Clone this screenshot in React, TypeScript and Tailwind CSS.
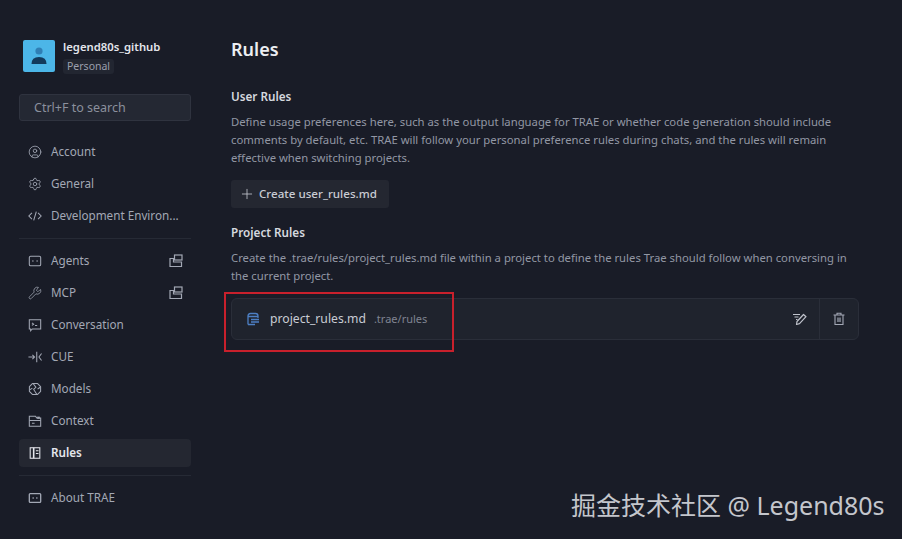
import { ReactNode } from "react";
import { CircleUser, Plus, Settings, Wrench } from "lucide-react";

const stroke = { fill: "none", stroke: "currentColor", strokeWidth: 1.2 };

const Svg = ({ children }: { children: ReactNode }) => (
    <svg width="16" height="16" viewBox="0 0 16 16" {...stroke}>
        {children}
    </svg>
);

const CodeIcon = () => (
    <Svg>
        <path d="M4.5 4.5 1 8l3.5 3.5M11.5 4.5 15 8l-3.5 3.5M9.5 3l-3 10" />
    </Svg>
);

const AgentsIcon = () => (
    <Svg>
        <rect x="1.5" y="2.5" width="13" height="11" rx="1.5" />
        <path d="M5 8h1.2M9.8 8H11" strokeWidth="1.6" />
    </Svg>
);

const ConversationIcon = () => (
    <Svg>
        <path d="M1.5 2h13v10.5H5L3 14.5v-2H1.5z" />
        <path d="M4.5 5.5 6.5 7l-2 1.5M8 8.5h2.5" />
    </Svg>
);

const CueIcon = () => (
    <Svg>
        <path d="M0.5 8h7M5 5.5 7.5 8 5 10.5" />
        <path d="M10 2v12M15.5 4 12.5 8l3 4" />
    </Svg>
);

const ModelsIcon = () => (
    <Svg>
        <path d="M5 1.8h6l3.4 3.4v5.6L11 14.2H5l-3.4-3.4V5.2z" strokeLinejoin="round" />
        <path d="M6 2 9 6 6.5 8.5 10 14M2 9l3-2M14 6l-3 2" />
    </Svg>
);

const ContextIcon = () => (
    <Svg>
        <path d="M1.5 14V2.5h7l1.5 2h4.5V14z" />
        <path d="M1.5 7.5h13M4.5 10.5h3" />
        <rect x="10.5" y="3" width="3" height="2.5" fill="currentColor" stroke="none" />
    </Svg>
);

const RulesIcon = () => (
    <Svg>
        <rect x="2.5" y="2" width="11" height="12" />
        <path d="M6.5 2v12" strokeWidth="1.8" />
        <path d="M9 5.5h3M9 8.5h3" />
    </Svg>
);

const AboutIcon = () => (
    <Svg>
        <rect x="1.5" y="3" width="13" height="10" rx="1" strokeWidth="1.5" />
        <path d="M5.2 8h1.4M9.4 8h1.4" strokeWidth="1.7" />
    </Svg>
);

const OpenIcon = () => (
    <svg width="14" height="14" viewBox="0 0 14 14" {...stroke}>
        <path d="M4.5 4.5H1v8h11.5V8H4.5z" />
        <rect x="5.5" y="1" width="7.5" height="5" />
    </svg>
);

const FileIcon = () => (
    <svg width="14" height="14" viewBox="0 0 14 14" fill="none" stroke="#4d7fc4" strokeWidth="1.3">
        <path d="M2 12.5V4Q2 1.5 4.5 1.5h5Q12 1.5 12 4V6" />
        <path d="M2 12.5h7M2 4.5h10M5 7.5h8M5 10h8" />
    </svg>
);

const EditIcon = () => (
    <svg width="16" height="16" viewBox="0 0 16 16" fill="none" stroke="currentColor" strokeWidth="1.2">
        <path d="M1 3.5h7M2.5 6h4M4 8.5h1.5" />
        <path d="m11.5 3.5 2.5 2.2-6.5 7-3 .8.5-3z" strokeLinejoin="round" />
    </svg>
);

const TrashIcon = () => (
    <svg width="14" height="14" viewBox="0 0 14 14" fill="none" stroke="currentColor" strokeWidth="1.1">
        <path d="M1.5 3h11M5 3V1.2h4V3M3 3v9.5h8V3" />
        <rect x="5" y="5.5" width="4" height="4.5" fill="currentColor" fillOpacity="0.6" stroke="none" />
    </svg>
);

const groups: { icon: ReactNode; label: string; open?: boolean; active?: boolean }[][] = [
    [
        { icon: <CircleUser size={16} strokeWidth={1.4} />, label: "Account" },
        { icon: <Settings size={16} strokeWidth={1.4} />, label: "General" },
        { icon: <CodeIcon />, label: "Development Environ..." },
    ],
    [
        { icon: <AgentsIcon />, label: "Agents", open: true },
        { icon: <Wrench size={16} strokeWidth={1.3} />, label: "MCP", open: true },
        { icon: <ConversationIcon />, label: "Conversation" },
        { icon: <CueIcon />, label: "CUE" },
        { icon: <ModelsIcon />, label: "Models" },
        { icon: <ContextIcon />, label: "Context" },
        { icon: <RulesIcon />, label: "Rules", active: true },
    ],
    [{ icon: <AboutIcon />, label: "About TRAE" }],
];

export default function App() {
    return (
        <div className="relative flex h-[539px] w-[902px] overflow-hidden bg-[#191c27] font-['Noto_Sans','Noto_Sans_CJK_SC',sans-serif] text-[11.7px] text-[#a3a8b5]">
            <aside className="ml-[19px] flex w-[172px] shrink-0 flex-col pt-[40px]">
                <div className="ml-1 flex h-8 items-center gap-2">
                    <div className="flex h-8 w-8 items-start justify-center rounded-[2px] bg-[#4cb6e8]">
                        <svg width="20" height="24" viewBox="0 0 20 24">
                            <circle cx="10" cy="11" r="3.6" fill="#2f7fb5" />
                            <path d="M2.5 24q0-7 7.5-7t7.5 7z" fill="#123a5c" />
                        </svg>
                    </div>
                    <div className="flex flex-col items-start">
                        <span className="text-[11.3px] leading-[16px] font-semibold text-[#e4e6ec]">legend80s_github</span>
                        <span className="mt-[4px] rounded-[3px] bg-[#222631] px-1 text-[10.5px] leading-[15px] text-[#9a9fad]">
                            Personal
                        </span>
                    </div>
                </div>

                <div className="mt-[22px] flex h-[27px] items-center rounded-[3px] border border-[#2f333f] bg-[#242833] px-[14px] pt-[2px] text-[12.5px] text-[#8b909d]">
                    Ctrl+F to search
                </div>

                <div className="mt-[17px] flex flex-col">
                    {groups.map((items, i) => (
                        <div key={i} className={i > 0 ? "mt-[8px] border-t border-[#262a35] pt-[8px]" : ""}>
                            <div className="flex flex-col gap-1">
                                {items.map((item) => (
                                    <div
                                        key={item.label}
                                        className={`flex h-7 items-center gap-[9px] rounded-[4px] pr-[8px] pl-[9px] ${
                                            item.active ? "bg-[#242731] font-semibold text-[#e4e6ec]" : ""
                                        }`}
                                    >
                                        <span className="flex w-[14px] justify-center">{item.icon}</span>
                                        <span className="flex-1 whitespace-nowrap">{item.label}</span>
                                        {item.open && <OpenIcon />}
                                    </div>
                                ))}
                            </div>
                        </div>
                    ))}
                </div>
            </aside>

            <main className="ml-[40px] w-[628px] shrink-0 pt-[36px]">
                <h1 className="text-[18px] leading-[26px] font-semibold text-[#eceef2]">Rules</h1>

                <h2 className="mt-[25px] text-[11.7px] leading-[18px] font-semibold text-[#d5d8df]">User Rules</h2>
                <p className="mt-[8px] text-[11.3px] leading-[18px] text-[#9297a4]">
                    Define usage preferences here, such as the output language for TRAE or whether code generation should include comments by default, etc. TRAE will follow your personal preference rules during chats, and the rules will remain effective when switching projects.
                </p>
                <button className="mt-[13px] flex h-7 w-[158px] items-center gap-[4px] rounded-[3px] bg-[#242731] pl-2 text-[11.6px] font-medium whitespace-nowrap text-[#c9ccd4]">
                    <Plus size={16} strokeWidth={1.2} />
                    Create user_rules.md
                </button>

                <h2 className="mt-[15px] text-[11.7px] leading-[18px] font-semibold text-[#d5d8df]">Project Rules</h2>
                <p className="mt-[8px] text-[11.3px] leading-[18px] text-[#9297a4]">
                    Create the .trae/rules/project_rules.md file within a project to define the rules Trae should follow when conversing in the current project.
                </p>

                <div className="mt-[13px] flex h-[42px] items-center rounded-[6px] border border-[#2a2e39] bg-[#1f232d]">
                    <div className="ml-[14px] flex flex-1 items-center">
                        <FileIcon />
                        <span className="ml-[10px] text-[12.2px] text-[#c9ccd4]">project_rules.md</span>
                        <span className="ml-[8px] text-[11px] text-[#7f8491]">.trae/rules</span>
                    </div>
                    <div className="flex w-[39px] justify-center text-[#c0c3cc]">
                        <EditIcon />
                    </div>
                    <div className="flex h-full w-[39px] items-center justify-center border-l border-[#2a2e39] text-[#a3a8b5]">
                        <TrashIcon />
                    </div>
                </div>
            </main>

            {/* annotation drawn on top of the screenshot */}
            <div className="absolute top-[292px] left-[224px] h-[60px] w-[230px] border-2 border-[#c8202c]" />

            <div className="absolute top-[487px] left-[571px] text-[25px] leading-[36px] whitespace-nowrap text-[#c4c6cc]">
                掘金技术社区 @ Legend80s
            </div>
        </div>
    );
}
